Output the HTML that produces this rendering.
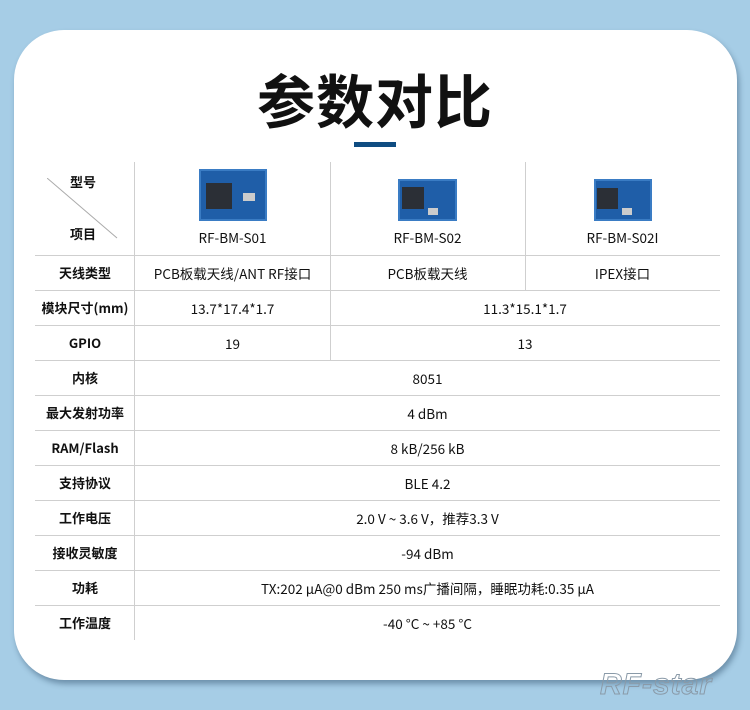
<!DOCTYPE html>
<html><head><meta charset="utf-8"><style>
*{margin:0;padding:0;box-sizing:border-box}
body{width:750px;height:710px;background:#a6cde6;position:relative;overflow:hidden;font-family:"Noto Sans CJK SC",sans-serif;color:#111}
.card{position:absolute;left:14px;top:30px;width:723px;height:650px;background:#fff;border-radius:50px;box-shadow:2px 4px 6px rgba(40,70,100,.45)}
.title{position:absolute;left:0;width:750px;top:60px;text-align:center;font-size:58px;font-weight:bold;font-family:"Noto Sans CJK SC",sans-serif;letter-spacing:1px;line-height:76px}
.bar{position:absolute;left:354px;top:142px;width:42px;height:5px;background:#0f4c81}
.h{position:absolute;height:1px;background:#cfcfcf}
.v{position:absolute;width:1px;background:#cfcfcf}
.c{position:absolute;height:35px;display:flex;align-items:center;justify-content:center;font-size:13.5px;white-space:nowrap;font-family:"Noto Sans CJK SC",sans-serif}
.l{left:35px;width:100px;font-weight:bold;font-size:13px}
.mod{position:absolute;background:#1f5ea8;border:2px solid #3a7cc4}
.chip{position:absolute;background:#2b2f36}
.xt{position:absolute;background:#ccc}
.logo{position:absolute;left:600px;top:668px;font-size:30px;font-style:italic;color:transparent;-webkit-text-stroke:1px #8a9aa8;font-weight:bold;letter-spacing:1px;font-family:"Liberation Sans",sans-serif}
</style></head><body>
<div class="card"></div>
<div class="title">参数对比</div>
<div class="bar"></div>

<div class="v" style="left:134px;top:162px;height:478px"></div>
<div class="v" style="left:330px;top:162px;height:198px"></div>
<div class="v" style="left:525px;top:162px;height:128px"></div>
<div class="h" style="left:35px;width:685px;top:255px"></div>
<div class="h" style="left:35px;width:685px;top:290px"></div>
<div class="h" style="left:35px;width:685px;top:325px"></div>
<div class="h" style="left:35px;width:685px;top:360px"></div>
<div class="h" style="left:35px;width:685px;top:395px"></div>
<div class="h" style="left:35px;width:685px;top:430px"></div>
<div class="h" style="left:35px;width:685px;top:465px"></div>
<div class="h" style="left:35px;width:685px;top:500px"></div>
<div class="h" style="left:35px;width:685px;top:535px"></div>
<div class="h" style="left:35px;width:685px;top:570px"></div>
<div class="h" style="left:35px;width:685px;top:605px"></div>

<svg style="position:absolute;left:47px;top:178px" width="72" height="62"><line x1="0" y1="0" x2="70" y2="60" stroke="#aaa" stroke-width="1"/></svg>
<div class="c l" style="top:164px;left:48px;width:70px">型号</div>
<div class="c l" style="top:216px;left:48px;width:70px">项目</div>

<div class="mod" style="left:199px;top:169px;width:68px;height:52px"></div>
<div class="chip" style="left:206px;top:183px;width:26px;height:26px"></div>
<div class="xt" style="left:243px;top:193px;width:12px;height:8px"></div>
<div class="mod" style="left:398px;top:179px;width:59px;height:42px"></div>
<div class="chip" style="left:402px;top:187px;width:22px;height:22px"></div>
<div class="xt" style="left:428px;top:208px;width:10px;height:7px"></div>
<div class="mod" style="left:594px;top:179px;width:58px;height:42px"></div>
<div class="chip" style="left:597px;top:188px;width:21px;height:21px"></div>
<div class="xt" style="left:622px;top:208px;width:10px;height:7px"></div>
<div class="c" style="left:135px;width:195px;top:219px">RF-BM-S01</div>
<div class="c" style="left:330px;width:195px;top:219px">RF-BM-S02</div>
<div class="c" style="left:525px;width:195px;top:219px">RF-BM-S02I</div>

<div class="c l" style="top:255px">天线类型</div>
<div class="c" style="left:135px;width:195px;top:255px">PCB板载天线/ANT RF接口</div>
<div class="c" style="left:330px;width:195px;top:255px">PCB板载天线</div>
<div class="c" style="left:525px;width:195px;top:255px">IPEX接口</div>

<div class="c l" style="top:290px">模块尺寸(mm)</div>
<div class="c" style="left:135px;width:195px;top:290px">13.7*17.4*1.7</div>
<div class="c" style="left:330px;width:390px;top:290px">11.3*15.1*1.7</div>

<div class="c l" style="top:325px">GPIO</div>
<div class="c" style="left:135px;width:195px;top:325px">19</div>
<div class="c" style="left:330px;width:390px;top:325px">13</div>

<div class="c l" style="top:360px">内核</div>
<div class="c" style="left:135px;width:585px;top:360px">8051</div>
<div class="c l" style="top:395px">最大发射功率</div>
<div class="c" style="left:135px;width:585px;top:395px">4 dBm</div>
<div class="c l" style="top:430px">RAM/Flash</div>
<div class="c" style="left:135px;width:585px;top:430px">8 kB/256 kB</div>
<div class="c l" style="top:465px">支持协议</div>
<div class="c" style="left:135px;width:585px;top:465px">BLE 4.2</div>
<div class="c l" style="top:500px">工作电压</div>
<div class="c" style="left:135px;width:585px;top:500px">2.0 V ~ 3.6 V，推荐3.3 V</div>
<div class="c l" style="top:535px">接收灵敏度</div>
<div class="c" style="left:135px;width:585px;top:535px">-94 dBm</div>
<div class="c l" style="top:570px">功耗</div>
<div class="c" style="left:135px;width:585px;top:570px">TX:202 µA@0 dBm 250 ms广播间隔，睡眠功耗:0.35 µA</div>
<div class="c l" style="top:605px">工作温度</div>
<div class="c" style="left:135px;width:585px;top:605px">-40 °C ~ +85 °C</div>

<div class="logo">RF-star</div>
</body></html>
